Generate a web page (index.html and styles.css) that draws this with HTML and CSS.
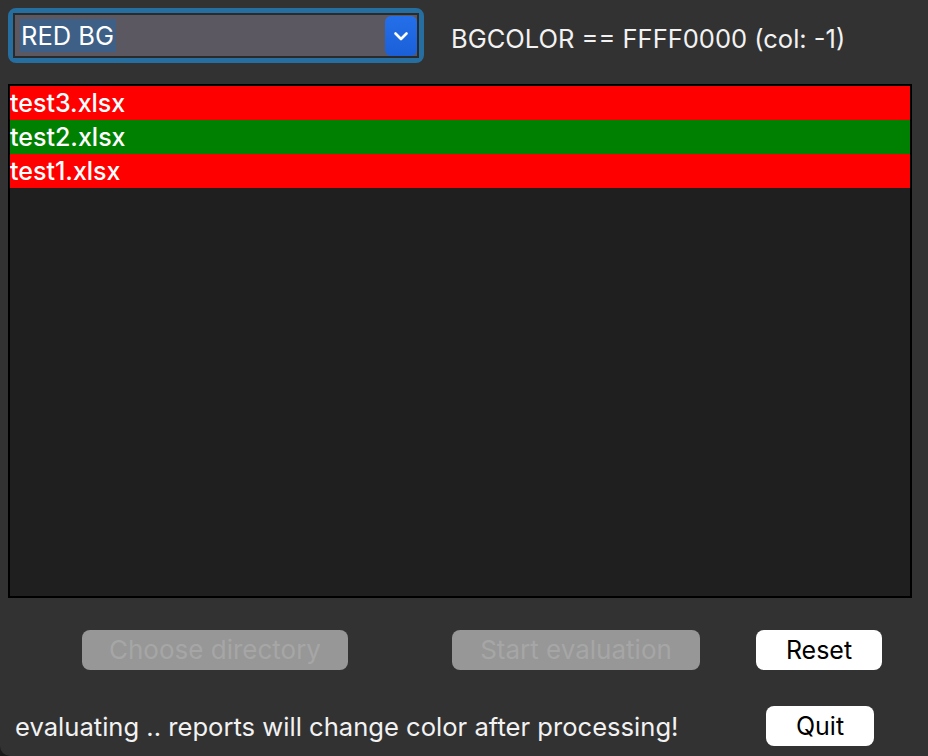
FILE: index.html
```html
<!DOCTYPE html>
<html>
<head>
<meta charset="utf-8">
<link rel="stylesheet" href="styles.css">
</head>
<body>
<div class="window">
  <div class="top">
    <div class="combo">
      <div class="field">
        <span class="sel">RED BG</span>
        <span class="arrow">
          <svg width="16" height="10" viewBox="0 0 16 10"><path d="M2.5 2.5 L8 8 L13.5 2.5" fill="none" stroke="#fff" stroke-width="2.6" stroke-linecap="round" stroke-linejoin="round"/></svg>
        </span>
      </div>
    </div>
    <div class="label">BGCOLOR == FFFF0000 (col: -1)</div>
  </div>
  <div class="list">
    <div class="row red">test3.xlsx</div>
    <div class="row green">test2.xlsx</div>
    <div class="row red">test1.xlsx</div>
  </div>
  <div class="buttons">
    <div class="btn disabled choose">Choose directory</div>
    <div class="btn disabled start">Start evaluation</div>
    <div class="btn reset">Reset</div>
  </div>
  <div class="bottom">
    <div class="status">evaluating .. reports will change color after processing!</div>
    <div class="btn quit">Quit</div>
  </div>
</div>
</body>
</html>
```
FILE: styles.css
```css
html, body {
  margin: 0;
  padding: 0;
}
body {
  background: #1a1a1a;
  width: 928px;
  height: 756px;
  overflow: hidden;
}
.window {
  background: #323232;
  height: 756px;
  box-sizing: border-box;
  padding: 8px 0 0 8px;
  border-bottom-left-radius: 10px;
  display: flex;
  flex-direction: column;
  font-family: Inter, "Liberation Sans", sans-serif;
  color: #f2f2f2;
}
.top {
  display: flex;
  align-items: center;
  height: 55px;
}
.combo {
  width: 416px;
  height: 55px;
  box-sizing: border-box;
  border: 5px solid #276ea0;
  border-radius: 8px;
}
.field {
  height: 100%;
  box-sizing: border-box;
  border: 2px solid #2a2a2a;
  background: #5b5862;
  display: flex;
  align-items: center;
  justify-content: space-between;
  padding-left: 5px;
}
.sel {
  background: #3e5f86;
  font-size: 25.5px;
  line-height: 33px;
  padding: 0 2px 0 1px;
  color: #fff;
}
.arrow {
  width: 32px;
  height: 40px;
  border-radius: 6px;
  background: linear-gradient(#2470ea, #1a5fd8);
  display: flex;
  align-items: center;
  justify-content: center;
}
.label {
  margin-left: 27px;
  padding-top: 6px;
  font-size: 25.5px;
  color: #f2f2f2;
}
.list {
  margin-top: 21px;
  width: 904px;
  height: 514px;
  box-sizing: border-box;
  border: 2px solid #000;
  background: #1f1f1f;
}
.row {
  height: 34px;
  line-height: 34px;
  font-size: 25px;
  font-weight: 500;
  color: #fff;
}
.red { background: #ff0000; }
.green { background: #008000; }
.buttons {
  margin-top: 32px;
  display: flex;
  height: 40px;
}
.btn {
  height: 40px;
  line-height: 40px;
  border-radius: 8px;
  text-align: center;
  font-size: 25px;
  box-sizing: border-box;
}
.disabled {
  background: #979797;
  color: #a6a6a6;
  font-size: 26px;
}
.choose {
  margin-left: 74px;
  width: 266px;
}
.start {
  margin-left: 104px;
  width: 248px;
}
.reset {
  margin-left: 56px;
  width: 126px;
  background: #fff;
  color: #000;
}
.bottom {
  margin-top: 36px;
  display: flex;
  align-items: center;
  height: 40px;
}
.status {
  padding-left: 7px;
  width: 751px;
  font-size: 25.6px;
  color: #f2f2f2;
}
.quit {
  width: 108px;
  background: #fff;
  color: #000;
}
```
